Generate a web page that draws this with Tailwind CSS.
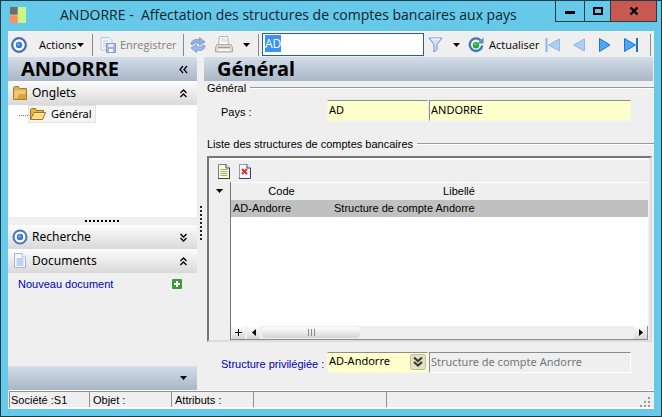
<!DOCTYPE html>
<html lang="fr">
<head>
  <meta charset="UTF-8">
  <meta name="viewport" content="width=device-width, initial-scale=1.0">
  <title>ANDORRE - Affectation des structures de comptes bancaires aux pays</title>
  <script src="https://cdn.jsdelivr.net/npm/@tailwindcss/browser@4"></script>
</head>
<body class="h-screen flex flex-col bg-[#66c9ea] border border-[#1d3d4b] font-['Liberation_Sans',Arial,sans-serif] text-[11px] leading-4 text-black overflow-hidden">

  <!-- Barre de titre -->
  <header class="h-[30px] shrink-0 flex items-start pl-2 pr-1">
    <svg class="w-4 h-4 mt-1.5 ml-px shrink-0" viewBox="0 0 16 16">
      <rect width="8" height="8" fill="#6f6f6f"/>
      <rect y="8" width="8" height="8" fill="#fb8f5c"/>
      <rect x="8" width="8" height="16" fill="#c9f58b"/>
      <path d="M8 0v16M0 8h8" stroke="#d8e8a0" stroke-width=".6"/>
    </svg>
    <h1 class="flex-1 pl-[34px] pt-[3px] font-['Open_Sans',sans-serif] text-sm leading-[22px] text-[#10242c] whitespace-pre">ANDORRE -  Affectation des structures de comptes bancaires aux pays</h1>
    <div class="flex h-[21px] border border-t-0 border-[#2a3a42]">
      <button aria-label="Réduire" class="w-7 flex items-center justify-center">
        <svg class="w-3 h-3" viewBox="0 0 12 12"><path d="M1 7.5h10" stroke="#000" stroke-width="3"/></svg>
      </button>
      <button aria-label="Agrandir" class="w-[26px] flex items-center justify-center border-l border-[#2a3a42]">
        <svg class="w-3 h-3" viewBox="0 0 12 12"><rect x="2" y="3" width="8" height="6" fill="none" stroke="#000" stroke-width="2"/></svg>
      </button>
      <button aria-label="Fermer" class="w-[46px] flex items-center justify-center border-l border-[#2a3a42] bg-[#c75950]">
        <svg class="w-3 h-3" viewBox="0 0 12 12"><path d="M2.500 2.500l7 7M9.500 2.500l-7 7" stroke="#000" stroke-width="2.400"/></svg>
      </button>
    </div>
  </header>

  <div class="flex-1 min-h-0 flex flex-col mx-[7px] mb-[7px] bg-[#efefef]">

    <!-- Barre d'outils -->
    <div class="h-[26px] shrink-0 flex items-center border-t border-white font-['Open_Sans',sans-serif] whitespace-nowrap">
      <svg class="w-4 h-4 ml-[3px] shrink-0" viewBox="0 0 16 16">
        <circle cx="8" cy="8" r="6.800" fill="#fff" stroke="#3f6fb5" stroke-width="2.200"/>
        <circle cx="8" cy="8" r="3.200" fill="#3878d8"/><circle cx="7.500" cy="7.500" r="1.200" fill="#7fb2f5"/>
      </svg>
      <button class="w-[45px] flex items-center justify-between ml-3">Actions
        <svg class="w-[7px] h-1" viewBox="0 0 7 4"><path d="M0 0h7L3.500 4z"/></svg>
      </button>
      <span class="w-px h-[22px] ml-2 bg-[#8a8a8a]"></span>
      <button disabled class="w-[73px] flex items-center ml-[7px] gap-1 text-[#808080]">
        <svg class="w-4 h-4 shrink-0" viewBox="0 0 16 16">
          <path d="M1 .5h8l3 3V13H1z" fill="#f0f3fa" stroke="#b9c4dc"/>
          <path d="M3 4h5M3 6.500h5M3 9h3" stroke="#bac8e4"/>
          <path d="M6.500 6.500h9v9h-9z" fill="#a3b5da" stroke="#8c9ec8"/>
          <path d="M8.500 7h5v3h-5z" fill="#e8edf8"/><path d="M9 12h4v3H9z" fill="#f4f6fb"/>
        </svg>
        Enregistrer
      </button>
      <span class="w-px h-[22px] ml-2.5 bg-[#8a8a8a]"></span>
      <button aria-label="Recharger" class="ml-1.5">
        <svg class="w-4 h-4" viewBox="0 0 16 16">
          <path d="M1 7.500C1 3.500 5 1.500 9.500 3V.5L15 5 9.500 8.500V6.500C6 5.500 4 6 3.500 7.500z" fill="#91afe0" stroke="#7394cc" stroke-width=".8"/>
          <path d="M15 8.500c0 4-4 6-8.500 4.500v2.500L1 11l5.500-3.500v2c3.500 1 5.500.5 6-1z" fill="#9cbae8" stroke="#7394cc" stroke-width=".8"/>
        </svg>
      </button>
      <button aria-label="Imprimer" class="ml-[9px]">
        <svg class="w-[18px] h-[18px]" viewBox="0 0 18 18">
          <path d="M4.500.5h8l1 8h-10z" fill="#fcfcfc" stroke="#b5b5b5"/>
          <path d="M6 3h5M6 5h6" stroke="#ccc"/>
          <path d="M2 8.500h14l1.500 3v4.500H.5v-4.500z" fill="#d9d6d1" stroke="#aeaba7"/>
          <path d="M3 11.500h12" stroke="#999794"/><path d="M3 14h12" stroke="#f5f4f1" stroke-width="2"/>
        </svg>
      </button>
      <button aria-label="Options d'impression" class="ml-2.5">
        <svg class="w-[7px] h-1" viewBox="0 0 7 4"><path d="M0 0h7L3.500 4z"/></svg>
      </button>
      <span class="w-px h-[22px] ml-2 bg-[#8a8a8a]"></span>
      <input id="recherche" aria-label="Rechercher" type="text" value="AD" class="ml-[3px] w-[162px] h-[23px] px-0.5 pb-0.5 bg-white border border-[#2b5f8f] text-xs outline-none selection:bg-[#3a94f5] selection:text-white">
      <button aria-label="Filtrer" class="ml-1">
        <svg class="w-[15px] h-4" viewBox="0 0 15 16">
          <path d="M1 1h13L9 7.500v5L6 15V7.500z" fill="#d4e2f6" stroke="#6f93cf"/><path d="M3 2h9" stroke="#f8fbff"/>
        </svg>
      </button>
      <button aria-label="Options du filtre" class="ml-2.5">
        <svg class="w-[7px] h-1" viewBox="0 0 7 4"><path d="M0 0h7L3.500 4z"/></svg>
      </button>
      <button class="w-[68px] flex items-center ml-2 gap-[5px]">
        <svg class="w-4 h-4 shrink-0" viewBox="0 0 16 16">
          <path d="M12.500 3.200A6.300 6.300 0 1 0 14.300 8.500" fill="#edf3fc" stroke="#4674b8" stroke-width="2.300"/>
          <path d="M15.500.5v6H9.500z" fill="#5586cc"/>
          <circle cx="8" cy="8.200" r="3.200" fill="#27ae3a"/><circle cx="7.300" cy="7.300" r="1" fill="#7ee081"/>
        </svg>
        Actualiser
      </button>
      <button aria-label="Premier" class="ml-[9px]">
        <svg class="w-4 h-4" viewBox="0 0 16 16"><path d="M1.500 1v14" stroke="#8db8e8" stroke-width="2"/><path d="M14.500 2v12L3.500 8z" fill="#abd0f5" stroke="#8db8e8"/></svg>
      </button>
      <button aria-label="Précédent" class="ml-[11px]">
        <svg class="w-4 h-4" viewBox="0 0 16 16"><path d="M12.500 2v12L1.500 8z" fill="#abd0f5" stroke="#8db8e8"/></svg>
      </button>
      <button aria-label="Suivant" class="ml-2.5">
        <svg class="w-4 h-4" viewBox="0 0 16 16"><path d="M1.500 1.500v13L12 8z" fill="#4ba6f7" stroke="#2372cc"/></svg>
      </button>
      <button aria-label="Dernier" class="ml-2.5">
        <svg class="w-4 h-4" viewBox="0 0 16 16"><path d="M.5 1.500v13L11.500 8z" fill="#4ba6f7" stroke="#2372cc"/><path d="M13 1v14" stroke="#2372cc" stroke-width="2"/></svg>
      </button>
      <span class="w-px h-[22px] ml-auto mr-[3px] bg-[#8a8a8a]"></span>
    </div>

    <div class="flex-1 min-h-0 flex">

      <!-- Volet gauche -->
      <aside class="w-[189px] shrink-0 flex flex-col font-['Noto_Sans',sans-serif]">
        <div class="h-6 flex items-center justify-between pl-[13px] pr-[9px] bg-linear-to-b from-[#d3deea] to-[#a9b6c5]">
          <h2 class="text-xl leading-6 font-bold">ANDORRE</h2>
          <button aria-label="Replier le volet">
            <svg class="w-[9px] h-[9px]" viewBox="0 0 9 9"><path d="M4 1L1 4.500 4 8M8 1L5 4.500 8 8" fill="none" stroke="#000" stroke-width="1.300"/></svg>
          </button>
        </div>
        <button class="h-6 flex items-center pl-1 pr-2.5 text-xs bg-linear-to-b from-[#fdfdfd] to-[#d9d9d9]">
          <svg class="w-4 h-4" viewBox="0 0 16 16">
            <path d="M1.500 14.500v-12l1-1h4l1 2h7v11z" fill="#e0b04b" stroke="#a87c25"/><path d="M2.500 5.500h11v8h-11z" fill="#f0c976"/><path d="M7 9h7v5H5z" fill="#d9a53b"/>
          </svg>
          <span class="ml-1">Onglets</span>
          <svg class="w-[7px] h-[9px] ml-auto" viewBox="0 0 7 9"><path d="M.5 4L3.500 1l3 3M.5 8l3-3 3 3" fill="none" stroke="#000" stroke-width="1.300"/></svg>
        </button>
        <nav class="flex-1 flex items-start pl-[11px] bg-white">
          <span class="w-[9px] mt-2.5 border-t border-dotted border-[#777]"></span>
          <a href="#general" class="h-[18px] flex items-center gap-[5px] pr-[3px] pl-px bg-[#f4f4f4] border border-[#e3e3e3] text-[11px]">
            <svg class="w-4 h-4" viewBox="0 0 16 16">
              <path d="M.5 13.500v-10l1-1h4l1 2h7v3" fill="#e6b544" stroke="#9c7422"/><path d="M.5 13.500l3.500-7h11.500l-3 7z" fill="#fbdc83" stroke="#9c7422"/><path d="M4.500 7.500h9" stroke="#fff4cc"/>
            </svg>
            Général
          </a>
        </nav>
        <div class="h-2 flex items-center justify-center">
          <span class="w-[35px] h-0.5 bg-[repeating-linear-gradient(to_right,#000_0_2px,transparent_2px_4px)]"></span>
        </div>
        <button class="h-6 flex items-center pl-1 pr-2.5 text-xs bg-linear-to-b from-[#fdfdfd] to-[#d9d9d9]">
          <svg class="w-4 h-4" viewBox="0 0 16 16">
            <circle cx="8" cy="8" r="6.500" fill="#fff" stroke="#4876b8" stroke-width="2"/>
            <circle cx="8" cy="8" r="3.200" fill="#3c78ce"/><circle cx="7.500" cy="7.500" r="1.200" fill="#85b4f2"/>
          </svg>
          <span class="ml-1">Recherche</span>
          <svg class="w-[7px] h-[9px] ml-auto" viewBox="0 0 7 9"><path d="M.5 1l3 3 3-3M.5 5l3 3 3-3" fill="none" stroke="#000" stroke-width="1.300"/></svg>
        </button>
        <button class="h-6 flex items-center pl-1 pr-2.5 text-xs bg-linear-to-b from-[#fdfdfd] to-[#d9d9d9]">
          <svg class="w-4 h-4" viewBox="0 0 16 16">
            <path d="M2.500.5h7.500l3.500 3.500v10.500h-11z" fill="#f5f9ff" stroke="#a4b8da"/><path d="M10 .5V4h3.500" fill="#fff" stroke="#a4b8da"/>
            <path d="M4.500 6h7M4.500 8h7M4.500 10h7M4.500 12h7" stroke="#86abe4"/>
          </svg>
          <span class="ml-1">Documents</span>
          <svg class="w-[7px] h-[9px] ml-auto" viewBox="0 0 7 9"><path d="M.5 4L3.500 1l3 3M.5 8l3-3 3 3" fill="none" stroke="#000" stroke-width="1.300"/></svg>
        </button>
        <div class="h-[93px] flex items-start justify-between pl-2.5 pr-[15px] pt-[3px] font-['Liberation_Sans',Arial,sans-serif] text-[11px] leading-4">
          <a href="#nouveau" class="text-[#0000b4]">Nouveau document</a>
          <button aria-label="Ajouter un document" class="mt-[3px]">
            <svg class="w-2.5 h-2.5" viewBox="0 0 10 10"><rect width="10" height="10" rx="1" fill="#3f9a35"/><path d="M5 2v6M2 5h6" stroke="#fff" stroke-width="2"/></svg>
          </button>
        </div>
        <div class="h-6 flex items-center justify-end pr-2.5 bg-linear-to-b from-[#d3deea] to-[#a9b6c5]">
          <button aria-label="Plus de volets">
            <svg class="w-[7px] h-1" viewBox="0 0 7 4"><path d="M0 0h7L3.500 4z"/></svg>
          </button>
        </div>
      </aside>

      <!-- Séparateur -->
      <div class="w-[7px] shrink-0 flex items-center justify-center">
        <span class="w-0.5 h-[35px] bg-[repeating-linear-gradient(to_bottom,#222_0_2px,transparent_2px_4px)]"></span>
      </div>

      <!-- Contenu -->
      <main id="general" class="flex-1 min-w-0 flex flex-col text-[11px] leading-4">
        <h2 class="h-6 shrink-0 mr-px pl-[13px] bg-linear-to-b from-[#d3deea] to-[#a9b6c5] font-['Noto_Sans',sans-serif] text-xl leading-6 font-bold">Général</h2>

        <div class="h-3.5 flex items-center pl-[3px] gap-1">
          <h3>Général</h3>
          <span class="flex-1 h-0.5 border-t border-[#9b9b9b] bg-white"></span>
        </div>
        <div class="flex items-start pl-[17px] mt-[5px] pr-[23px]">
          <label for="pays" class="w-[106px] pt-1">Pays :</label>
          <input id="pays" readonly value="AD" class="w-[101px] h-[21px] px-px pb-[3px] bg-[#ffffcc] border border-[#f7f7df] border-t-[#8c8c8c] font-['Noto_Sans',sans-serif] text-[11px] outline-none">
          <input aria-label="Nom du pays" readonly value="ANDORRE" class="flex-1 min-w-0 h-[21px] ml-px px-px pb-[3px] bg-[#ffffcc] border border-[#f7f7df] border-t-[#8c8c8c] border-l-[#8c8c8c] font-['Noto_Sans',sans-serif] text-[11px] outline-none">
        </div>

        <div class="h-4 flex items-center pl-[3px] gap-1 mt-[15px]">
          <h3>Liste des structures de comptes bancaires</h3>
          <span class="flex-1 h-0.5 border-t border-[#9b9b9b] bg-white"></span>
        </div>

        <!-- Grille -->
        <div class="flex-1 min-h-0 flex flex-col mt-1 ml-[3px] mr-0.5 border-2 border-[#dcdcdc] border-t-[#777] border-l-[#777]">
          <div class="h-6 shrink-0 flex items-center gap-[9px] pl-[7px] mx-0.5 border-t-2 border-white">
            <button aria-label="Nouvelle ligne">
              <svg class="w-3 h-[15px]" viewBox="0 0 12 15">
                <path d="M.5.5H8L11.500 4v10.500H.5z" fill="#fffcca" stroke="#777f96"/><path d="M8 .5V4h3.500" fill="#fff" stroke="#39435f"/>
                <path d="M2.500 5.500h7M2.500 7.500h7M2.500 9.500h7M2.500 11.500h7" stroke="#a5a987"/><path d="M11.500 4v10.500H0" fill="none" stroke="#39435f"/>
              </svg>
            </button>
            <button aria-label="Supprimer la ligne">
              <svg class="w-3 h-[15px]" viewBox="0 0 12 15">
                <path d="M.5.5H8L11.500 4v10.500H.5z" fill="#f4f5ff" stroke="#8f97b8"/><path d="M8 .5V4h3.500" fill="#fff" stroke="#39435f"/>
                <path d="M3 5l5 5M8 5l-5 5" stroke="#e0361c" stroke-width="2"/><path d="M11.500 4v10.500H0" fill="none" stroke="#39435f"/>
              </svg>
            </button>
          </div>
          <div class="flex-1 min-h-0 flex mr-0.5">
            <div class="w-[22px] shrink-0 flex justify-center items-start pt-[7px] border-r border-[#777]">
              <button aria-label="Menu de la grille" class="flex">
                <svg class="w-[7px] h-1" viewBox="0 0 7 4"><path d="M0 0h7L3.500 4z"/></svg>
              </button>
            </div>
            <div class="flex-1 min-w-0 flex flex-col bg-white">
              <table class="w-full table-fixed">
                <thead>
                  <tr class="h-[17px] bg-[#efefef] border-t border-white">
                    <th class="w-[101px] p-0 font-normal">Code</th>
                    <th class="w-[254px] p-0 font-normal">Libellé</th>
                    <th class="p-0"></th>
                  </tr>
                </thead>
                <tbody>
                  <tr class="h-[17px] bg-[#c0c0c0]">
                    <td class="p-0 pl-0.5">AD-Andorre</td>
                    <td class="p-0 pl-0.5">Structure de compte Andorre</td>
                    <td class="p-0"></td>
                  </tr>
                </tbody>
              </table>
              <div class="h-3.5 flex items-stretch mt-auto bg-[#efefef] border-b border-[#8a8a8a]">
                <button aria-label="Ajouter" class="w-[13px] ml-px flex items-center justify-center bg-linear-to-b from-white to-[#d6d6d6]">
                  <svg class="w-[7px] h-[7px]" viewBox="0 0 7 7"><path d="M3.500 0v7M0 3.500h7" stroke="#000"/></svg>
                </button>
                <button aria-label="Défiler à gauche" class="w-[13px] ml-0.5 flex items-center justify-center bg-linear-to-b from-white to-[#d6d6d6]">
                  <svg class="w-1 h-[7px]" viewBox="0 0 4 7"><path d="M4 0v7L0 3.500z"/></svg>
                </button>
                <div class="w-[98px] ml-0.5 my-px flex items-center justify-center gap-0.5 rounded-sm bg-linear-to-b from-white to-[#d4d4d4]">
                  <span class="w-px h-[7px] bg-[#888]"></span>
                  <span class="w-px h-[7px] bg-[#888]"></span>
                  <span class="w-px h-[7px] bg-[#888]"></span>
                </div>
                <button aria-label="Défiler à droite" class="w-3.5 ml-auto flex items-center justify-center bg-linear-to-b from-white to-[#d6d6d6] border-r border-[#8a8a8a]">
                  <svg class="w-1 h-[7px]" viewBox="0 0 4 7"><path d="M0 0v7l4-3.500z"/></svg>
                </button>
              </div>
            </div>
          </div>
        </div>

        <div class="flex items-start shrink-0 pl-[17px] mt-2.5 mb-[17px] pr-[23px]">
          <label for="structure" class="w-[106px] pt-1 text-[#0000b4] whitespace-nowrap">Structure privilégiée :</label>
          <div class="relative w-[101px]">
            <select id="structure" class="w-full h-[21px] px-px pb-[3px] appearance-none bg-[#ffffcc] border border-[#f7f7df] border-t-[#8c8c8c] font-['Noto_Sans',sans-serif] text-[11px] outline-none">
              <option>AD-Andorre</option>
            </select>
            <svg class="absolute right-0.5 top-0.5 w-4 h-4 pointer-events-none" viewBox="0 0 16 16">
              <rect x=".5" y=".5" width="15" height="15" rx="2" fill="#e2e1c4" stroke="#bcbba3"/>
              <path d="M4 3.500l4 3.500 4-3.500M4 8l4 3.500L12 8" fill="none" stroke="#3b3b32" stroke-width="2.200"/>
            </svg>
          </div>
          <input aria-label="Libellé de la structure" disabled value="Structure de compte Andorre" class="flex-1 min-w-0 h-[21px] ml-px px-px pb-[3px] bg-[#efefef] border border-white border-t-[#8c8c8c] border-l-[#8c8c8c] font-['Noto_Sans',sans-serif] text-[11px] text-[#777]">
        </div>
      </main>
    </div>

    <!-- Barre d'état -->
    <footer class="h-[19px] shrink-0 flex items-stretch ml-px border-t border-white">
      <div class="flex-1 flex border-t border-l border-[#8f8f8f] border-b-2 border-b-white">
        <span class="w-[79px] pl-px">Société :S1</span>
        <span class="w-[82px] pl-[3px] border-l border-[#8f8f8f]">Objet :</span>
        <span class="w-[82px] pl-[3px] border-l border-[#8f8f8f]">Attributs :</span>
        <span class="w-[133px] border-l border-[#8f8f8f]"></span>
        <span class="flex-1 flex items-end justify-end pr-1 border-l border-[#8f8f8f]">
          <svg class="w-2.5 h-2.5" viewBox="0 0 10 10" fill="#999"><path d="M8 0h2v2H8zM4 4h2v2H4zM8 4h2v2H8zM0 8h2v2H0zM4 8h2v2H4zM8 8h2v2H8z"/></svg>
        </span>
      </div>
    </footer>
  </div>

  <script>
    const champ = document.getElementById("recherche");
    champ.focus();
    champ.select();
  </script>
</body>
</html>
